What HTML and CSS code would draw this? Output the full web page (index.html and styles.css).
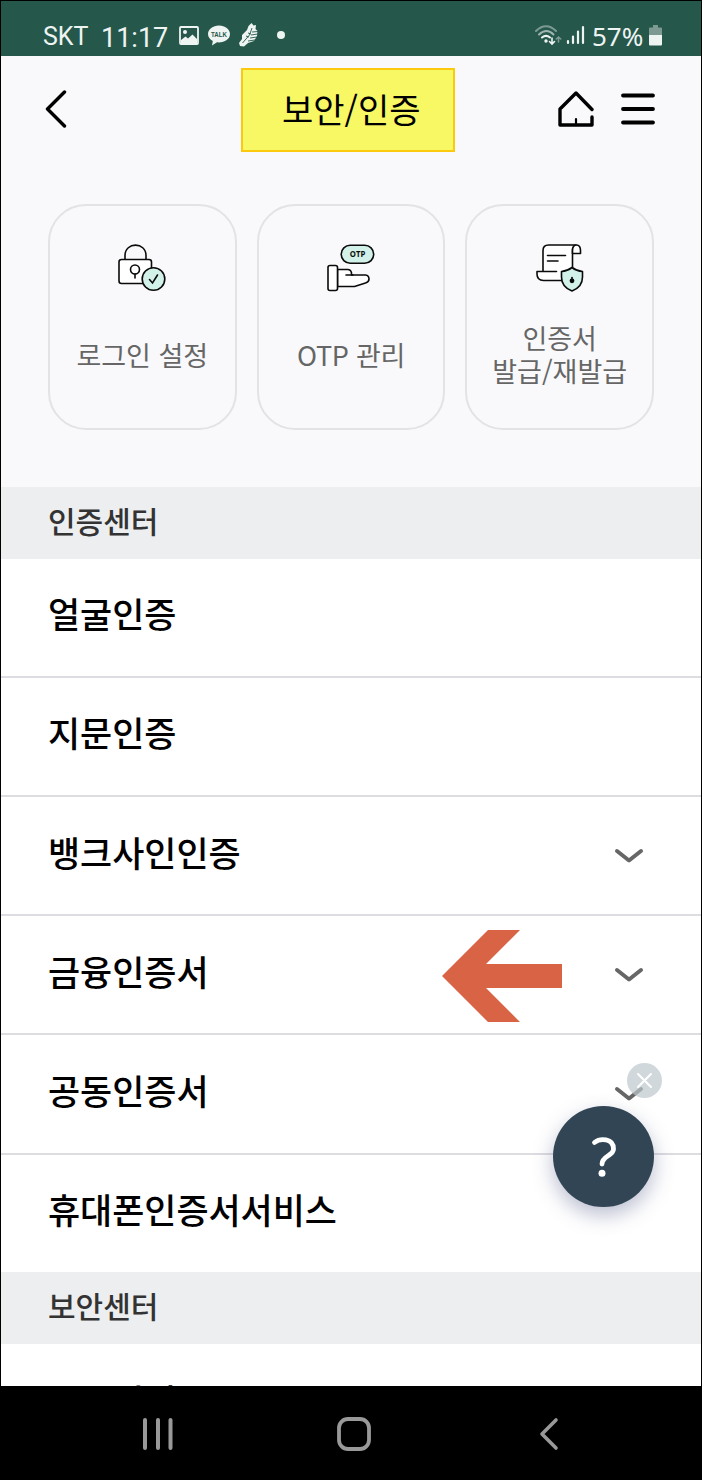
FILE: index.html
```html
<!DOCTYPE html>
<html lang="ko">
<head>
    <meta charset="UTF-8">
    <meta name="viewport" content="width=device-width, initial-scale=1.0">
    <title>보안/인증</title>
    <link rel="stylesheet" href="styles.css">
</head>
<body>
    <div class="phone">
        <div class="status-bar">
            <div class="status-left">
                <span class="carrier">SKT</span>
                <span class="clock">11:17</span>
                <svg class="icon-photo" width="20" height="19" viewBox="0 0 20 19">
                    <rect x="1" y="1" width="18" height="17" rx="1" fill="none" stroke="#eef4f2" stroke-width="1.8"/>
                    <circle cx="6" cy="6" r="2" fill="#eef4f2"/>
                    <path d="M2 14 L6.500 10.500 L9 12.500 L13.500 8.500 L18 13 V17 H2 Z" fill="#eef4f2"/>
                </svg>
                <svg class="icon-talk" width="22" height="21" viewBox="0 0 22 21">
                    <path d="M11 .5 C5 .5 0 4.200 0 9 C0 12 2 14.500 4.800 16 L4 20.500 L9 17.300 C16 18 22 14.500 22 9 C22 4.200 17 .5 11 .5 Z" fill="#eef4f2"/>
                    <text x="11" y="11.600" text-anchor="middle" textLength="16" lengthAdjust="spacingAndGlyphs" class="talk-text">TALK</text>
                </svg>
                <svg class="icon-shoe" width="20" height="24" viewBox="0 0 20 24">
                    <path d="M12.500 0 L14.500 2.500 L17 2 L16.500 6 L18.500 8 L18 13 L15 18 L9 20 L5 23.500 L1 23 L0 20 L3 16 L3 12 L8 7 L9.500 3 Z" fill="#eef4f2"/>
                    <path d="M13 5 L10.500 12 L3.500 20 M9 10 l3 1 M7 13 l3 1 M11 15 l7 -1 M9 18 l7 -1 M12 12 l7 -1 M13 9 l6 -.5" fill="none" stroke="#26574b" stroke-width=".9"/>
                </svg>
                <span class="dot"></span>
            </div>
            <div class="status-right">
                <svg class="icon-wifi" width="27" height="21" viewBox="0 0 27 21">
                    <g fill="none" stroke-linecap="round">
                        <path d="M1 6 C7 -.5 15 -.5 21 6" stroke="#7d9a92" stroke-width="2"/>
                        <path d="M4 9.500 C9 5 14 5 18.500 9.500" stroke="#9fb5af" stroke-width="2"/>
                        <path d="M7 12.500 Q11 9.200 15 12.500" stroke="#eef4f2" stroke-width="2"/>
                        <path d="M17 13 V18.500 M14.500 16.500 L17 19 L19.500 16.500" stroke="#eef4f2" stroke-width="1.6"/>
                        <path d="M23.500 17 V12 M21.300 14 L23.500 12 L25.700 14" stroke="#7d9a92" stroke-width="1.5"/>
                    </g>
                    <circle cx="11" cy="16" r="1.700" fill="#eef4f2"/>
                </svg>
                <svg class="icon-signal" width="19" height="20" viewBox="0 0 19 20">
                    <path d="M2 18 V16 M7 18 V11.500 M12 18 V6.500 M17 18 V2" stroke="#eef4f2" stroke-width="2.200" stroke-linecap="round"/>
                </svg>
                <span class="battery-text">57%</span>
                <svg class="icon-battery" width="13" height="21" viewBox="0 0 13 21">
                    <path d="M4 0 H9 V2.500 H12 Q13 2.500 13 3.500 V10 H0 V3.500 Q0 2.500 1 2.500 H4 Z" fill="#7d9a92"/>
                    <path d="M0 10 H13 V19.500 Q13 20.500 12 20.500 H1 Q0 20.500 0 19.500 Z" fill="#eef4f2"/>
                </svg>
            </div>
        </div>

        <div class="top">
            <header class="header">
                <svg class="back" width="22" height="38" viewBox="0 0 22 38">
                    <path d="M19.500 2 L2.500 19 L19.500 36" fill="none" stroke="#000" stroke-width="3.400" stroke-linecap="round" stroke-linejoin="round"/>
                </svg>
                <h1 class="title">보안/인증</h1>
                <div class="header-menu">
                    <svg width="36" height="36" viewBox="0 0 36 36">
                        <g fill="none" stroke="#000" stroke-width="3.400" stroke-linecap="round" stroke-linejoin="round">
                            <path d="M34 18.500 L18 2 L2 18 V34 H34 V26"/>
                            <path d="M18 28 V33" stroke-width="2.200"/>
                        </g>
                    </svg>
                    <svg width="34" height="32" viewBox="0 0 34 32">
                        <path d="M2 2.500 H32 M2 16 H32 M2 29.500 H32" stroke="#000" stroke-width="3.800" stroke-linecap="round"/>
                    </svg>
                </div>
            </header>

            <div class="cards">
                <a class="card">
                    <svg width="48" height="48" viewBox="0 0 48 48">
                        <g fill="none" stroke="#0a0a0a" stroke-width="1.600" stroke-linecap="round">
                            <path d="M7 15 V11.500 C7 -2.300 28 -2.300 28 11.500 V15"/>
                            <rect x="1" y="15.500" width="32.500" height="24" rx="2.500" fill="#fff"/>
                            <circle cx="17" cy="25.500" r="4.500"/>
                            <path d="M17 30 V34"/>
                            <circle cx="35.500" cy="35" r="11.300" fill="#d2f1e8"/>
                            <path d="M31.500 35.500 L34.500 39 L39.500 31"/>
                        </g>
                    </svg>
                    <span class="card-label">로그인 설정</span>
                </a>
                <a class="card">
                    <svg width="48" height="48" viewBox="0 0 48 48">
                        <g fill="#fff" stroke="#0a0a0a" stroke-width="1.600" stroke-linejoin="round" stroke-linecap="round">
                            <rect x="14.200" y="1.200" width="32.500" height="18" rx="9" fill="#d2f1e8"/>
                            <path d="M10.500 25.500 H21 Q25 26 24.500 31 H38.500 Q42 31.500 42 35 Q42 38 38.500 39 L27.500 42.500 H10.500 Z"/>
                            <path d="M19 31 H26"/>
                            <rect x="1" y="21.500" width="9.500" height="25" rx="2"/>
                        </g>
                        <text x="30.500" y="13.300" text-anchor="middle" textLength="15.500" lengthAdjust="spacingAndGlyphs" class="otp-text">OTP</text>
                    </svg>
                    <span class="card-label otp-label">OTP 관리</span>
                </a>
                <a class="card">
                    <svg width="48" height="48" viewBox="0 0 48 48">
                        <g fill="#fff" stroke="#0a0a0a" stroke-width="1.600" stroke-linejoin="round" stroke-linecap="round">
                            <path d="M7 28 V6.500 Q7 1 12.500 1 H40 L36.500 5 V36 H7 Z"/>
                            <path d="M36.500 9.500 H44.500 V6.500 Q44.500 1 40.500 1 Q36.500 1 36.500 6.500 Z"/>
                            <path d="M20.500 27.500 H1 V30 Q1 36.500 7.500 36.500 H26.500"/>
                            <path d="M11.500 11.500 H29.500 M11.500 17 H22"/>
                            <path d="M36 23.500 Q40.500 27 46.500 27.500 V33 Q46.500 43 36 47 Q25.500 43 25.500 33 V27.500 Q31.500 27 36 23.500 Z" fill="#d2f1e8"/>
                        </g>
                        <circle cx="36" cy="36.800" r="2.400" fill="#0a0a0a"/>
                        <path d="M36 33.500 V36" stroke="#0a0a0a" stroke-width="1.600" stroke-linecap="round"/>
                    </svg>
                    <span class="card-label">인증서<br>발급/재발급</span>
                </a>
            </div>
        </div>

        <main class="content">
            <h2 class="section-title">인증센터</h2>
            <ul class="menu">
                <li><span>얼굴인증</span></li>
                <li><span>지문인증</span></li>
                <li>
                    <span>뱅크사인인증</span>
                    <svg class="chevron" width="30" height="16" viewBox="0 0 30 16"><path d="M3 3 L15 12.500 L27 3"/></svg>
                </li>
                <li>
                    <span>금융인증서</span>
                    <svg class="arrow" width="120" height="92" viewBox="0 0 120 92">
                        <path d="M0 46 L46 0 H78 L44 34 H120 V58 H44 L78 92 H46 Z" fill="#d96445"/>
                    </svg>
                    <svg class="chevron" width="30" height="16" viewBox="0 0 30 16"><path d="M3 3 L15 12.500 L27 3"/></svg>
                </li>
                <li>
                    <span>공동인증서</span>
                    <svg class="chevron" width="30" height="16" viewBox="0 0 30 16"><path d="M3 3 L15 12.500 L27 3"/></svg>
                </li>
                <li><span>휴대폰인증서서비스</span></li>
            </ul>
            <h2 class="section-title">보안센터</h2>
            <ul class="menu security-menu">
                <li><span>로그인기록</span></li>
            </ul>
        </main>

        <!-- floating help button -->
        <div class="help">
            <svg width="101" height="101" viewBox="0 0 101 101">
                <path d="M41.500 36.500 C47 32 60.500 32 60.500 43 C60.500 50 49 49.500 49 58" fill="none" stroke="#fff" stroke-width="4.800" stroke-linecap="round"/>
                <circle cx="49" cy="67.300" r="3.500" fill="#fff"/>
            </svg>
        </div>
        <div class="help-close">
            <svg width="35" height="35" viewBox="0 0 35 35">
                <path d="M11 11 L24 24 M24 11 L11 24" stroke="#fff" stroke-width="2" stroke-linecap="round"/>
            </svg>
        </div>

        <nav class="nav-bar">
            <svg width="32" height="32" viewBox="0 0 32 32">
                <path d="M3 2 V30 M16 2 V30 M28.500 2 V30" stroke="#999" stroke-width="4" stroke-linecap="round"/>
            </svg>
            <svg width="34" height="34" viewBox="0 0 34 34">
                <rect x="2" y="2" width="30" height="30" rx="9" fill="none" stroke="#999" stroke-width="3.800"/>
            </svg>
            <svg width="20" height="34" viewBox="0 0 20 34">
                <path d="M17 3 L3 17 L17 31" fill="none" stroke="#999" stroke-width="3.600" stroke-linecap="round" stroke-linejoin="round"/>
            </svg>
        </nav>
    </div>
</body>
</html>
```

FILE: styles.css
```css
* {
    box-sizing: border-box;
}
body {
    margin: 0;
    font-family: "Noto Sans CJK KR", sans-serif;
    background-color: #000;
}
svg {
    display: block;
    flex-shrink: 0;
}
.phone {
    position: relative;
    display: flex;
    flex-direction: column;
    width: 702px;
    height: 1480px;
    padding: 1px 1px 0;
    background-color: #000;
    overflow: hidden;
}

/* status bar */
.status-bar {
    display: flex;
    justify-content: space-between;
    height: 55px;
    flex-shrink: 0;
    padding: 13px 39px 0 42px;
    background-color: #26574b;
    color: #eef4f2;
}
.status-left,
.status-right {
    display: flex;
    align-items: center;
    height: 42px;
}
.carrier {
    font: 25px/42px Roboto, sans-serif;
    width: 58px;
    padding-top: 4px;
}
.clock {
    font: 27px/42px Roboto, sans-serif;
    width: 78px;
    padding-top: 5px;
}
.icon-photo {
    margin-right: 9px;
}
.icon-talk {
    margin-right: 9px;
}
.icon-shoe {
    margin-right: 18px;
}
.talk-text {
    font: bold 7px "Liberation Sans", sans-serif;
    fill: #26574b;
}
.dot {
    width: 8px;
    height: 8px;
    border-radius: 50%;
    background-color: #eef4f2;
}
.icon-wifi {
    margin-right: 4px;
}
.icon-signal {
    margin-right: 7px;
}
.battery-text {
    font: 26px/42px "Noto Sans", sans-serif;
    width: 57px;
    padding-top: 2px;
}

/* header and shortcut cards */
.top {
    display: flex;
    flex-direction: column;
    height: 430.6px;
    flex-shrink: 0;
    padding-top: 12px;
    background-color: #f9f9fb;
}
.header {
    display: grid;
    grid-template-columns: 196px 214px 1fr;
    align-items: center;
    height: 84px;
    padding: 0 46px 0 44px;
}
.back,
.header-menu {
    margin-top: -2px;
}
.title {
    height: 84px;
    margin: 0;
    padding-left: 39px;
    border: 2px solid #fbc90d;
    background-color: #f8f865;
    font-size: 34px;
    font-weight: 400;
    line-height: 78px;
    white-space: nowrap;
}
.header-menu {
    display: flex;
    align-items: center;
    justify-content: flex-end;
    gap: 27px;
}
.cards {
    display: grid;
    grid-template-columns: repeat(3, 1fr);
    gap: 20px;
    padding: 52px 47px 0;
}
.card {
    display: flex;
    flex-direction: column;
    align-items: center;
    height: 226px;
    padding-top: 38px;
    border: 2px solid #e3e3e6;
    border-radius: 38px;
}
.card-label {
    display: flex;
    align-items: center;
    height: 66px;
    margin-top: 29px;
    color: #666;
    font-size: 27px;
    line-height: 33px;
    text-align: center;
}
.otp-label {
    letter-spacing: -0.3px;
}
.otp-text {
    font: bold 8px "Open Sans", sans-serif;
    fill: #0a0a0a;
}

/* list */
.content {
    height: 899px;
    flex-shrink: 0;
    overflow: hidden;
    background-color: #fff;
}
.section-title {
    height: 72px;
    margin: 0;
    padding-left: 47px;
    background-color: #edeef0;
    color: #333;
    font-size: 30px;
    font-weight: 500;
    line-height: 66px;
}
.menu {
    margin: 0;
    padding: 0;
    list-style: none;
}
.menu li {
    display: flex;
    align-items: center;
    height: 119.2px;
    padding: 0 57px 0 47px;
    border-bottom: 2px solid #dcdce1;
    color: #000;
    font-size: 34.9px;
    font-weight: 500;
}
.menu li:last-child {
    height: 117.6px;
    border-bottom: none;
}
.menu span {
    margin-bottom: 8px;
}
.security-menu {
    padding-top: 1px;
}
.chevron {
    margin-left: auto;
    fill: none;
    stroke: #666;
    stroke-width: 4;
    stroke-linecap: round;
    stroke-linejoin: round;
}
.arrow {
    margin-top: 2px;
    margin-left: auto;
}
.arrow + .chevron {
    margin-left: 52px;
}

.help {
    position: absolute;
    left: 553px;
    top: 1106px;
    width: 101px;
    height: 101px;
    border-radius: 50%;
    background-color: #324554;
    box-shadow: 0 8px 20px rgba(60, 70, 120, 0.35);
}
.help-close {
    position: absolute;
    left: 627px;
    top: 1063px;
    width: 35px;
    height: 35px;
    border-radius: 50%;
    background-color: rgba(190, 200, 204, 0.7);
}

/* android navigation */
.nav-bar {
    display: flex;
    align-items: center;
    flex: 1;
    gap: 163px;
    padding: 2px 0 0 141px;
    background-color: #000;
}
.nav-bar svg:last-child {
    margin-left: 5px;
}
```
